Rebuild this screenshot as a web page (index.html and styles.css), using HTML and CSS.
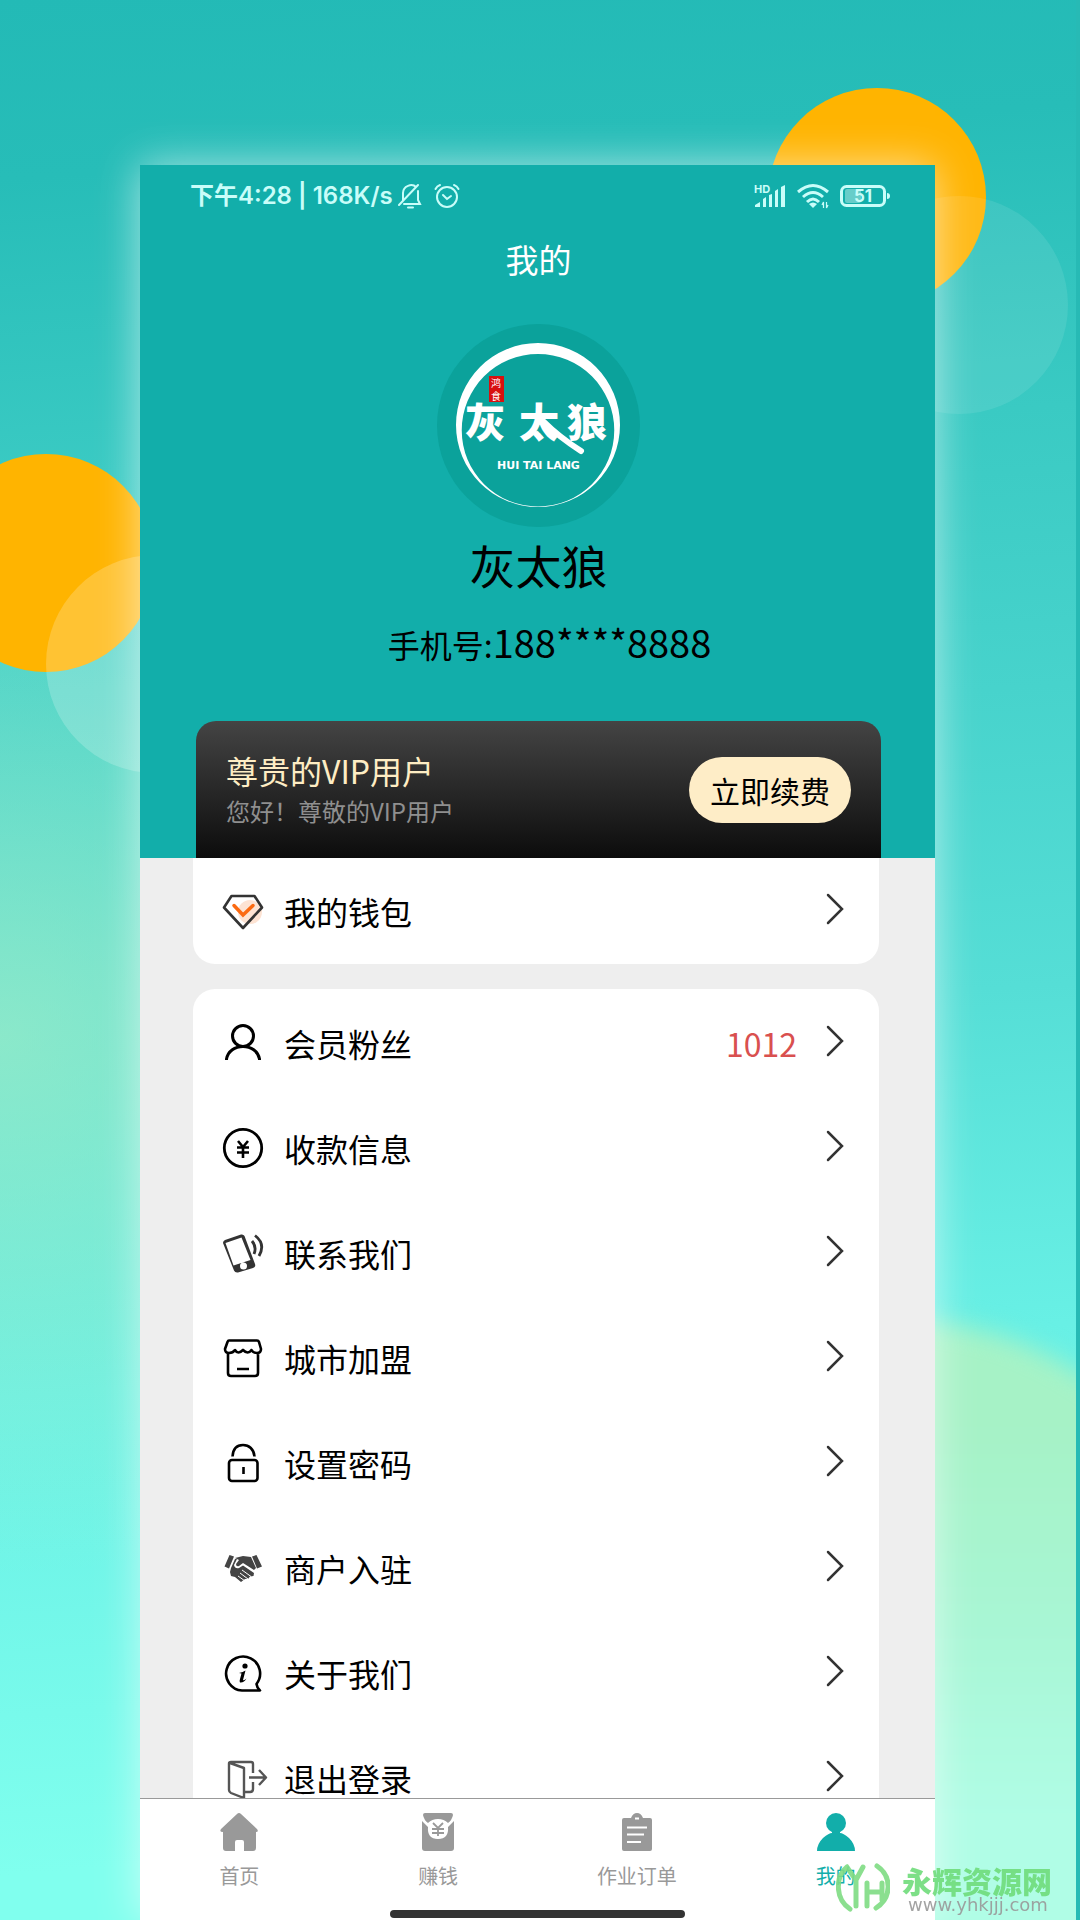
FILE: index.html
```
<!DOCTYPE html>
<html lang="zh-CN">
	<head>
		<meta charset="utf-8" />
		<meta name="viewport" content="width=device-width, initial-scale=1" />
		<title>我的</title>
		<link rel="stylesheet" href="styles.css">
	</head>
	<body>
		<div class="bg">
			<div class="blob"></div>
			<div class="ball ball_r"></div>
			<div class="ball ball_r2"></div>
			<div class="ball ball_l"></div>
			<div class="ball ball_l2"></div>
			<div class="edge"></div>
		</div>
		<div class="phone">
			<div class="screen">
				<div class="head">
					<div class="status">
						<span class="time">下午4:28 | 168K/s</span>
						<svg width="24" height="26" viewBox="0 0 24 26" fill="none" stroke="#c9fdf9" stroke-width="2" stroke-linecap="round"><path d="M1 22L20 2M5 17V10C5 3 14 0 18 4M20 8V17L22 21H6M10 24.500H15"/></svg>
						<svg class="clock" width="26" height="26" viewBox="0 0 26 26" fill="none" stroke="#c9fdf9" stroke-width="2" stroke-linecap="round"><circle cx="13" cy="14" r="10"/><path d="M9 12L13 16 17 13M1.500 6Q3 3 6 2M20 2Q23 3 24.500 6"/></svg>
						<span class="space"></span>
						<svg width="32" height="26" viewBox="0 0 32 26" fill="#c9fdf9"><text class="hd" x="0" y="10">HD</text><path d="M1 24V22L6 19V24zM9 24V16L12 14V24zM15 24V12L18 11V24zM21 24V8L24 6V24zM27 24V4L31 2V24z"/></svg>
						<svg class="wifi" width="32" height="26" viewBox="0 0 32 26" fill="none" stroke="#c9fdf9" stroke-width="3"><path d="M1 9Q16-4 31 9M6 14Q16 5 26 14M10 19Q16 13 22 19"/><path d="M12 21Q16 18 20 21L16 25z" fill="#c9fdf9" stroke="none"/><path d="M26.500 25V19L25 22M29.500 19V25L31 22" stroke-width="1.200"/></svg>
						<svg width="50" height="26" viewBox="0 0 50 26" fill="none" stroke="#c9fdf9" stroke-width="3"><rect x="1.500" y="3.500" width="43" height="19" rx="5"/><rect x="5" y="6" width="16" height="14" rx="2" fill="#67cdc9" stroke="none"/><path d="M47 10Q50 10 50 13T47 16z" fill="#c9fdf9" stroke="none"/><text class="power" x="23" y="19">51</text></svg>
					</div>
					<h1>我的</h1>
					<svg class="avatar" width="203" height="203" viewBox="0 0 203 203">
						<circle cx="101.500" cy="101.500" r="101.500" fill="#0ba29b"/>
						<path fill="#fff" fill-rule="evenodd" d="M101 19A82 82 0 1 1 101 183A82 82 0 1 1 101 19zM101 30A76 76 0 1 0 101 182.500A76 76 0 1 0 101 30z"/>
						<rect x="52" y="52" width="15" height="26" fill="#d8100f"/>
						<text class="seal" x="54" y="63">鸿</text>
						<text class="seal" x="54" y="76">食</text>
						<text class="brush" x="28" y="113">灰</text>
						<text class="brush" x="82" y="113">太</text>
						<text class="brush" x="130" y="113">狼</text>
						<path d="M106 97Q122 113 144 127" fill="none" stroke="#fff" stroke-width="6" stroke-linecap="round"/>
						<text class="pinyin" x="60" y="145">HUI TAI LANG</text>
					</svg>
					<h2>灰太狼</h2>
					<p class="tel">手机号:<b>188****8888</b></p>
					<div class="vip">
						<div class="vip_tx">
							<h3>尊贵的VIP用户</h3>
							<p>您好！尊敬的VIP用户</p>
						</div>
						<button type="button">立即续费</button>
					</div>
				</div>
				<ul class="list wallet">
					<li><a href="#">
						<svg class="ico" viewBox="0 0 40 40" fill="none" stroke="#333" stroke-width="2.600"><circle cx="27" cy="21" r="12" fill="#fde3d3" stroke="none"/><path d="M8.500 5H31.500L39 16.500 20 37 1 16.500z" stroke-linejoin="round"/><path d="M11 14.500L20 24 30 14.500" stroke="#fb6a12" stroke-width="3.500" stroke-linecap="round"/></svg>
						<span>我的钱包</span>
						<svg class="go" viewBox="0 0 18 32"><path d="M2 2L16 16 2 30"/></svg>
					</a></li>
				</ul>
				<ul class="list">
					<li><a href="#">
						<svg class="ico" viewBox="0 0 40 40" fill="none" stroke="#000" stroke-width="3"><circle cx="20" cy="13" r="10.500"/><path d="M3.500 37V36C5 28 12 23.500 20 23.500S35 28 36.500 36V37"/></svg>
						<span>会员粉丝</span>
						<em>1012</em>
						<svg class="go" viewBox="0 0 18 32"><path d="M2 2L16 16 2 30"/></svg>
					</a></li>
					<li><a href="#">
						<svg class="ico" viewBox="0 0 40 40" fill="none" stroke="#000" stroke-width="2.800"><circle cx="20" cy="20" r="18.700"/><path d="M15 13L20 19 25 13M20 19V30M14 19.500H26M14 24.500H26" stroke-width="2.600"/></svg>
						<span>收款信息</span>
						<svg class="go" viewBox="0 0 18 32"><path d="M2 2L16 16 2 30"/></svg>
					</a></li>
					<li><a href="#">
						<svg class="ico" viewBox="0 0 40 40"><path fill="#333" fill-rule="evenodd" d="M2 7L18 1.500Q20.500 1 21.500 3L32 31Q33 34 30 35L15 39.500Q12 40 11 37.500L0 10Q0 8 2 7zM2.500 10L10.500 32.500 27.500 27 18.500 4.500zM20.500 29.500A3.500 3.500 0 1 0 20.500 36.500A3.500 3.500 0 1 0 20.500 29.500z"/><path d="M29 8Q34 14 31 21M32 2.500Q43 11 36 23" fill="none" stroke="#333" stroke-width="2.800"/></svg>
						<span>联系我们</span>
						<svg class="go" viewBox="0 0 18 32"><path d="M2 2L16 16 2 30"/></svg>
					</a></li>
					<li><a href="#">
						<svg class="ico" viewBox="0 0 40 40" fill="none" stroke="#000" stroke-width="2.600" stroke-linejoin="round"><path d="M6 2.500H34Q35.500 2.500 36 4L38 11Q38 15 34 15 30 15 28.500 12 25 17 20 12 15 17 12 12 10 15 6 15 2 15 2 11L4.500 4Q5 2.500 6 2.500zM5 15V35Q5 38 8 38H32Q35 38 35 35V15M14 31H26"/></svg>
						<span>城市加盟</span>
						<svg class="go" viewBox="0 0 18 32"><path d="M2 2L16 16 2 30"/></svg>
					</a></li>
					<li><a href="#">
						<svg class="ico" viewBox="0 0 40 40" fill="none" stroke="#000" stroke-width="2.600"><rect x="6" y="17" width="28.500" height="21" rx="3"/><path d="M9.500 13.500C10 6 14 2 20 2S31 6 31.500 13.500"/><path d="M20.500 24V31"/></svg>
						<span>设置密码</span>
						<svg class="go" viewBox="0 0 18 32"><path d="M2 2L16 16 2 30"/></svg>
					</a></li>
					<li><a href="#">
						<svg class="ico" viewBox="0 0 40 40" fill="#444"><path d="M6.500 7L11 8.500 6 20.500 1.500 18.500zM29 8.500L33.500 7 39 18.500 34 20.500zM12 10L20 8 28 9 33 20 31 22 20 15 16 18Q13 19 13 16L16 12zM8 20L12 11 14 11 11 17Q12 21 16 20L20 17.500 31 25 30.500 28 27 28.500 25 31 22 31 18 34 12 29 8 28 7 24z"/><path d="M19 22L28 28.500M17 25L25 31M15 28L22 33" fill="none" stroke="#fff" stroke-width="1"/></svg>
						<span>商户入驻</span>
						<svg class="go" viewBox="0 0 18 32"><path d="M2 2L16 16 2 30"/></svg>
					</a></li>
					<li><a href="#">
						<svg class="ico" viewBox="0 0 40 40"><path d="M37 37.500H19A17 17 0 1 1 33.500 31Q34 35 37 37.500z" fill="none" stroke="#000" stroke-width="2.600" stroke-linejoin="round"/><circle cx="22" cy="13" r="2.600"/><path d="M16 20Q20 19 22.500 17.500L20 27Q21 28 23.500 25.500 21 30 17 29.500 16 29 17 26L18.500 20.500z"/></svg>
						<span>关于我们</span>
						<svg class="go" viewBox="0 0 18 32"><path d="M2 2L16 16 2 30"/></svg>
					</a></li>
					<li><a href="#">
						<svg class="ico" viewBox="0 0 40 40" fill="none" stroke="#555" stroke-width="2.400" stroke-linejoin="round"><path d="M7 5L21 10V40L8 35Q6 34 6 32V5.500Q6 4 8 4H28Q30 4 30 6V15M30 24V31Q30 34 27 34H22M26 19.500H42M36 12L43 19.500 36 27"/></svg>
						<span>退出登录</span>
						<svg class="go" viewBox="0 0 18 32"><path d="M2 2L16 16 2 30"/></svg>
					</a></li>
				</ul>
			</div>
			<nav class="tab">
				<a href="#">
					<svg viewBox="0 0 38 38"><path d="M17 1Q19-1 21 1L37 16Q39 19 36 19V35Q36 38 33 38H24V29Q24 27 22 27H17Q15 27 15 29V38H6Q3 38 3 35V19Q-1 19 1 16z"/></svg>
					首页
				</a>
				<a href="#">
					<svg viewBox="0 0 38 38"><path d="M6 0H32Q34 0 34 2 33 7 29 10 25 6 19 6T9 10Q5 7 4 2 4 0 6 0zM3 8L9 14Q8 26 19 26T29 14L35 8V35Q35 38 32 38H6Q3 38 3 35z"/><circle cx="19" cy="16" r="9.500" fill="#fff"/><path d="M14 10L19 15 24 10M19 15V23M13 16H25M13 20H25" fill="none" stroke="#999" stroke-width="1.800"/></svg>
					赚钱
				</a>
				<a href="#">
					<svg viewBox="0 0 38 38"><path d="M6 5H13Q15 0 19 0T25 5H32Q34 5 34 7V36Q34 38 32 38H6Q4 38 4 36V7Q4 5 6 5z"/><path d="M17 5.500H21M9 14.500H29M9 21.500H26M9 29H23" fill="none" stroke="#fff" stroke-width="2"/></svg>
					作业订单
				</a>
				<a href="#" class="current">
					<svg viewBox="0 0 38 38"><circle cx="19" cy="10" r="10"/><path d="M0 38Q0 31 6 25 12 20 15 20V18H23V20Q26 20 32 25 38 31 38 38z"/></svg>
					我的
				</a>
			</nav>
			<div class="bar"></div>
		</div>
		<div class="mark">
			<svg width="54" height="50" viewBox="0 0 54 50" fill="none" stroke="#7fdc83" stroke-width="5" stroke-linecap="round"><path d="M11 4C-1 14-1 36 14 46M41 3C56 13 56 35 40 45M11 4Q16 12 20 17L27 4M20 17V43M31 20V43M31 29H46M46 20V37"/></svg>
			<div>
				<strong>永辉资源网</strong>
				<small>www.yhkjjj.com</small>
			</div>
		</div>
	</body>
</html>
```
FILE: styles.css
```
body,h1,h2,h3,p,ul,li{padding:0;margin:0;font-weight:normal;}
*{box-sizing:border-box;}
a{text-decoration:none;color:inherit;}
li{list-style:none;}
svg{display:block;flex:none;}
body{position:relative;height:100vh;overflow:hidden;padding:165px 145px 0 140px;font-family:"Noto Sans CJK SC",sans-serif;color:#000;}

.bg{position:absolute;left:0;top:0;right:0;bottom:0;overflow:hidden;z-index:-1;background:radial-gradient(ellipse 60% 28% at 0 54%,rgba(175,240,195,.6),rgba(175,240,195,0)),linear-gradient(176deg,#23bab6 0%,#27bdb8 9%,#3acac3 24%,#47d3cc 38%,#55ded6 53%,#68f0e5 70%,#80ffee 94%);}
.ball{position:absolute;width:218px;height:218px;border-radius:50%;background:#ffb400;}
.ball_r{right:94px;top:88px;}
.ball_r2{right:12px;top:196px;background:rgba(255,255,255,.09);}
.ball_l{left:-63px;top:454px;}
.ball_l2{left:46px;top:555px;background:rgba(255,255,255,.2);}
.blob{position:absolute;right:-220px;bottom:-400px;width:800px;height:1000px;border-radius:50%;background:linear-gradient(#a6f2c6 10%,#a8f6d4 30%,#b0fde6 50%);filter:blur(12px);}
.edge{position:absolute;right:0;top:0;bottom:0;width:4px;background:#27bab5;}

.phone{display:flex;flex-direction:column;height:100%;background:#eee;box-shadow:0 0 40px rgba(255,255,255,.6);}
.screen{flex:1;min-height:0;overflow:hidden;}
.head{display:flex;flex-direction:column;align-items:center;background:#12aeaa;padding:0 54px 0 56px;}
.status{display:flex;align-items:center;align-self:stretch;height:62px;margin:0 -9px 0 -6px;}
.time{font:600 24px/30px Inter,"Noto Sans CJK SC",sans-serif;color:#c9fdf9;margin-right:5px;}
.clock{margin-left:12px;}
.space{flex:1;}
.wifi{margin:0 11px;}
.hd{font:bold 11px Inter,sans-serif;}
.power{font:bold 17px Inter,sans-serif;text-anchor:middle;fill:#c9fdf9;stroke:none;}
h1{font-size:33px;line-height:48px;color:#fff;margin:8px 0 41px;}
.brush{font:900 40px "Noto Sans CJK SC",sans-serif;fill:#fff;}
.seal{font:10px "Noto Sans CJK SC",sans-serif;fill:#fff;}
.pinyin{font:bold 11px "DejaVu Sans",sans-serif;fill:#fff;}
h2{font-size:46px;line-height:60px;margin-top:7px;}
.tel{font-size:32px;line-height:48px;padding-left:22px;margin:24px 0 53px;}
.tel b{font-size:38px;font-weight:normal;}
.vip{display:flex;align-items:center;justify-content:space-between;align-self:stretch;height:137px;padding:0 30px;border-radius:20px 20px 0 0;background:linear-gradient(#444,#0c0c0c);}
.vip h3{font-size:32px;line-height:42px;color:#feedc4;}
.vip p{font-size:24px;line-height:40px;color:#8f8f8f;}
.vip button{border:0;border-radius:33px;width:162px;height:66px;padding:0;background:#feedc7;font-family:inherit;font-size:30px;color:#000;}

.list{margin:0 56px 25px 53px;padding-top:1px;background:#fff;border-radius:22px 22px 0 0;}
.wallet{border-radius:0 0 22px 22px;padding-top:0;padding-bottom:1px;}
.list a{display:flex;align-items:center;height:105px;padding:0 35px 0 30px;font-size:32px;}
.list span{flex:1;margin-left:21px;}
.list em{font-style:normal;color:#d9504f;margin-right:29px;}
.ico{width:40px;height:40px;overflow:visible;}
.go{width:18px;height:32px;margin-bottom:3px;fill:none;stroke:#333;stroke-width:2.5;stroke-linecap:round;}

.tab{display:flex;height:112px;padding-top:14px;background:#fff;border-top:1px solid #999;}
.tab a{flex:1;display:flex;flex-direction:column;align-items:center;font-size:20px;line-height:30px;color:#999;}
.tab svg{width:38px;height:38px;fill:#999;margin-bottom:10px;}
.tab .current{color:#12aeaa;}
.tab .current svg{fill:#12aeaa;}
.bar{flex:none;height:10px;background:#fff;}
.bar:before{content:"";display:block;width:37%;height:8px;margin:0 auto;border-radius:4px;background:#333;}

.mark{position:absolute;right:28px;bottom:7px;display:flex;align-items:center;gap:12px;color:#6fdc7b;opacity:.9;}
.mark strong{display:block;font-size:30px;line-height:34px;font-weight:900;}
.mark small{display:block;font:18px/16px "DejaVu Sans",sans-serif;color:#999;margin-left:6px;}
```
